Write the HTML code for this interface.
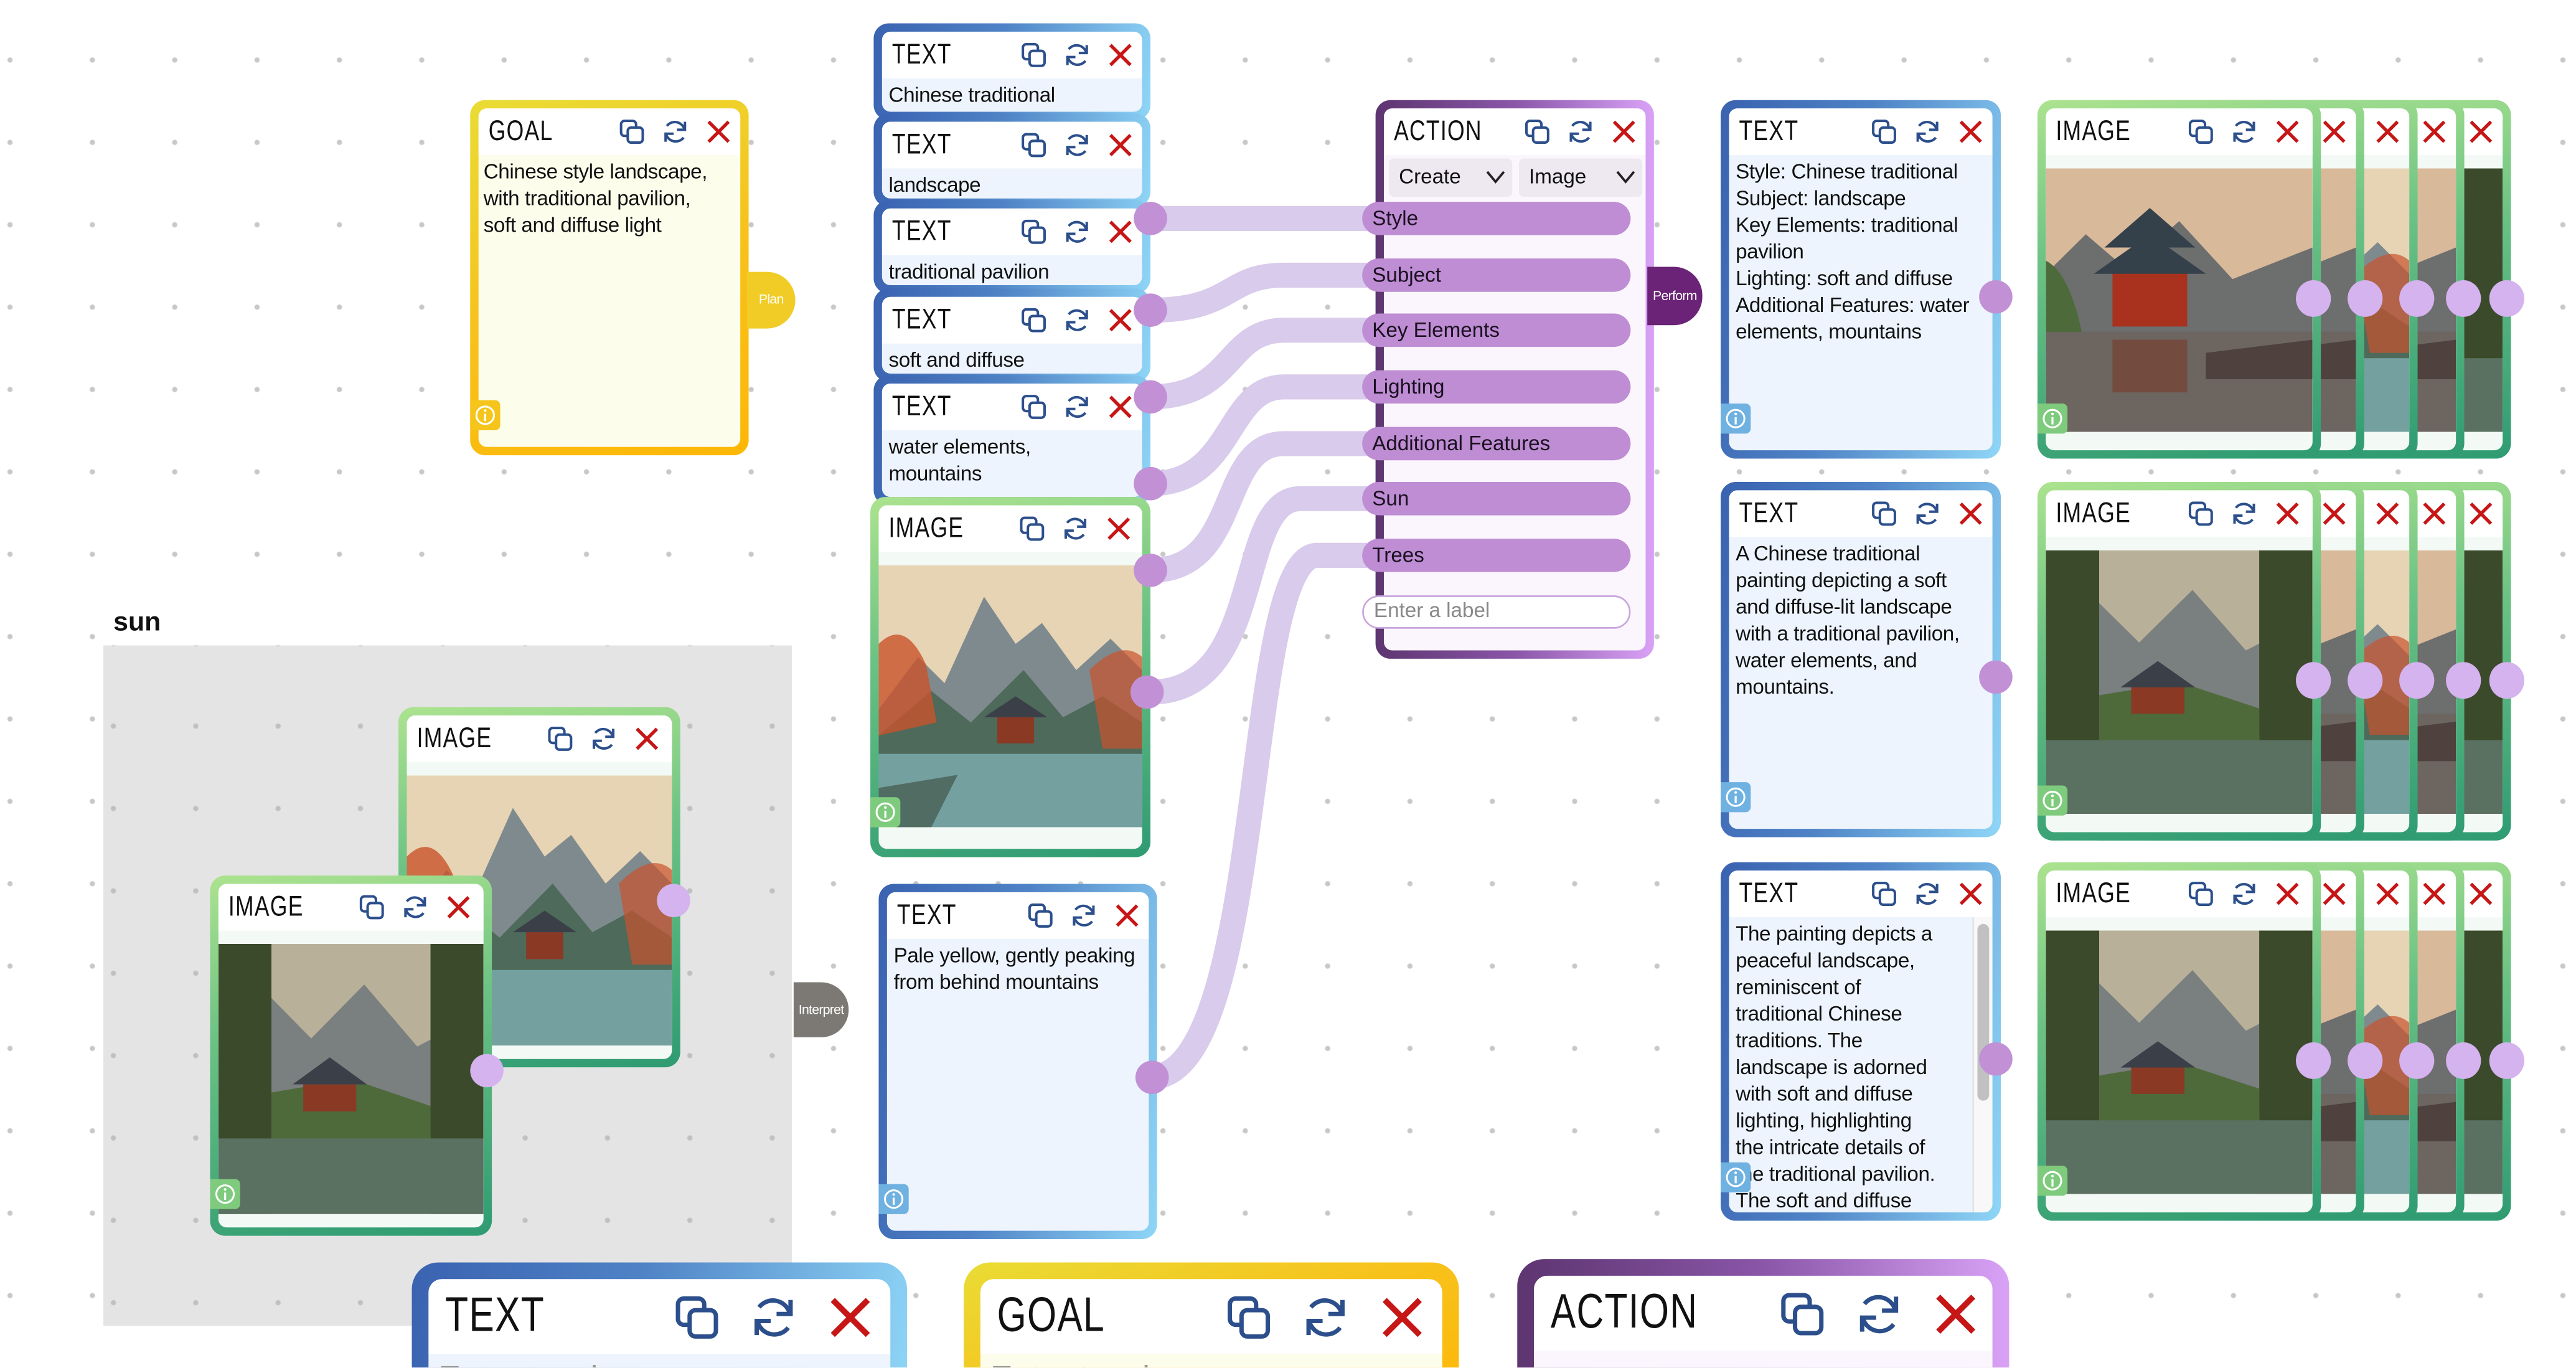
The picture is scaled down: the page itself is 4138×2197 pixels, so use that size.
<!DOCTYPE html>
<html><head><meta charset="utf-8">
<style>
*{box-sizing:border-box;margin:0;padding:0}
html,body{width:4138px;height:2197px;overflow:hidden;background:#fff}
#w{position:absolute;left:0;top:0;width:1545px;height:820.3px;transform:scale(2.67832);transform-origin:0 0;
background-image:radial-gradient(circle,#c8c8c8 1.3px,transparent 1.8px);background-size:49.4px 49.4px;background-position:-18.7px 11.3px;
font-family:"Liberation Sans","DejaVu Sans",sans-serif;color:#111;overflow:hidden}
.n{position:absolute;border-radius:9px;padding:5px}
.in{width:100%;height:100%;border-radius:5px;overflow:hidden;position:relative}
.hd{height:28px;background:#fff;position:relative}
.tt{position:absolute;left:6px;top:4px;font-family:"Liberation Sans",sans-serif;font-size:17px;letter-spacing:.6px;transform:scaleX(.78);transform-origin:0 0;white-space:nowrap}
.ic{position:absolute;top:6px;width:16px;height:16px}
.bd{font-size:12.4px;letter-spacing:-.15px;line-height:16px;padding:2px 4px;white-space:pre-line}
.blue{background:linear-gradient(100deg,#3a62b0 0%,#4f83c6 45%,#8fd6f7 100%)}
.blue .in{background:#edf4fd}
.green{background:linear-gradient(170deg,#ace38f 0%,#6cc284 40%,#2f9b72 100%)}
.green .in{background:#f3faf5}
.yellow{background:linear-gradient(160deg,#e9dc35 0%,#f7c21c 50%,#fdb706 100%)}
.yellow .in{background:#fdfdec}
.purple{background:linear-gradient(90deg,#5d3570 0%,#8a56a8 50%,#d9a2f6 100%)}
.purple .in{background:#fbf6fd}
.img{position:absolute;left:0;right:0;top:36px;overflow:hidden}
.info{position:absolute;left:0;width:18px;height:18px;border-radius:0 3px 3px 0}
.dot{position:absolute;width:20px;height:20px;border-radius:50%;background:#d4b3ee}
.pdot{position:absolute;width:20px;height:20px;border-radius:50%;background:#c190d5}
.pill{position:absolute;left:817px;width:161px;height:20px;border-radius:10px;background:#be8dd3;font-size:12.4px;line-height:20px;padding-left:6px;color:#1a1020}
.tab{position:absolute;color:#fff;font-size:8px;text-align:center;border-radius:0 17px 17px 0;letter-spacing:-.3px}
.big{font-size:29px!important;left:10px!important;top:6px!important}
</style></head><body>
<svg width="0" height="0" style="position:absolute">
<defs>
<symbol id="cp" viewBox="0 0 16 16"><rect x="1.5" y="1.5" width="9" height="9" rx="2" fill="none" stroke="#2c4f8c" stroke-width="1.5"/><rect x="5.5" y="5.5" width="9" height="9" rx="2" fill="#fff" stroke="#2c4f8c" stroke-width="1.5"/></symbol>
<symbol id="rf" viewBox="0 0 16 16"><path d="M13.5 6.5A6 6 0 0 0 3 4.5M2.5 9.5A6 6 0 0 0 13 11.5" fill="none" stroke="#2c4f8c" stroke-width="1.5"/><path d="M13.8 2v4.8H9" fill="none" stroke="#2c4f8c" stroke-width="1.5"/><path d="M2.2 14V9.2H7" fill="none" stroke="#2c4f8c" stroke-width="1.5"/></symbol>
<symbol id="x" viewBox="0 0 16 16"><path d="M2 2L14 14M14 2L2 14" stroke="#c61616" stroke-width="2"/></symbol>
<symbol id="inf" viewBox="0 0 16 16"><circle cx="8" cy="8" r="6" fill="none" stroke="#fff" stroke-width="1.3"/><path d="M8 7v5" stroke="#fff" stroke-width="1.4"/><circle cx="8" cy="4.8" r=".9" fill="#fff"/></symbol>
<symbol id="land1" viewBox="0 0 100 100" preserveAspectRatio="none"><rect width="100" height="100" fill="#e6d4b4"/><path d="M0 55L15 35 25 45 40 12 52 30 62 22 75 40 88 28 100 40V75H0Z" fill="#7f8a8e"/><path d="M0 65L20 48 35 60 55 40 70 58 85 50 100 60V80H0Z" fill="#4e6a5a"/><rect y="72" width="100" height="28" fill="#74a0a0"/><path d="M0 30Q10 20 18 38L22 60 0 65Z" fill="#c9532c" opacity=".8"/><path d="M80 40Q92 28 100 35V70H85Z" fill="#c9532c" opacity=".7"/><rect x="45" y="58" width="14" height="10" fill="#8a3a24"/><path d="M40 58L52 50 64 58Z" fill="#3b4048"/><path d="M0 85L30 80 20 100H0Z" fill="#3a4a3a" opacity=".6"/></symbol>
<symbol id="land2" viewBox="0 0 100 100" preserveAspectRatio="none"><rect width="100" height="100" fill="#d8b99a"/><path d="M0 40L15 25 30 38 50 20 70 42 100 30V70H0Z" fill="#6d6e6e"/><path d="M0 35Q10 40 15 70H0Z" fill="#4d6a3a"/><rect y="62" width="100" height="38" fill="#6c6560"/><rect x="25" y="38" width="28" height="22" fill="#a8321e"/><path d="M18 40L39 25 60 40Z" fill="#34404a"/><path d="M22 30L39 15 56 30Z" fill="#34404a"/><rect x="25" y="65" width="28" height="20" fill="#7a3a2a" opacity=".6"/><path d="M60 70L100 65V80H60Z" fill="#3a2a28" opacity=".6"/></symbol>
<symbol id="land3" viewBox="0 0 100 100" preserveAspectRatio="none"><rect width="100" height="100" fill="#b8b098"/><path d="M0 45L20 20 35 35 55 15 75 38 100 25V70H0Z" fill="#7a7f80"/><path d="M0 0H20V100H0ZM80 0H100V100H80Z" fill="#3a4a2a"/><path d="M20 55L50 50 80 60V75H20Z" fill="#4e6a3a"/><rect y="72" width="100" height="28" fill="#5a7060"/><rect x="32" y="50" width="20" height="12" fill="#8a3a24"/><path d="M28 52L42 42 56 52Z" fill="#3b4048"/></symbol>
</defs></svg>
<div id="w">

<svg style="position:absolute;left:0;top:0" width="1545" height="820">
<g fill="none" stroke="#d9cbec" stroke-width="15" stroke-linecap="butt">
<path d="M690 131H820"/>
<path d="M690 186C740 186 735 165 770 165H820"/>
<path d="M690 238C740 238 735 198 770 198H820"/>
<path d="M690 290C740 290 735 232 770 232H820"/>
<path d="M690 342C745 342 730 266 770 266H820"/>
<path d="M690 415C760 415 740 299 780 299H820"/>
<path d="M690 646C760 646 745 333 790 333H820"/>
</g></svg>

<div class="n yellow" style="left:282px;top:60px;width:167px;height:213px"><div class="in">
<div class="hd"><span class="tt">GOAL</span><svg class="ic" style="left:84px"><use href="#cp"/></svg><svg class="ic" style="left:110px"><use href="#rf"/></svg><svg class="ic" style="left:136px"><use href="#x"/></svg></div>
<div class="bd" style="padding-left:3px">Chinese style landscape,
with traditional pavilion,
soft and diffuse light</div></div>
<div class="info" style="top:180px;background:#f5c51b"><svg width="14" height="14" style="margin:2px"><use href="#inf"/></svg></div></div>
<div class="tab" style="left:448px;top:163px;width:29px;height:34px;line-height:34px;background:#f1cc26">Plan</div>

<div class="n blue" style="left:524px;top:14px;width:166px;height:58px"><div class="in">
<div class="hd"><span class="tt">TEXT</span><svg class="ic" style="left:83px"><use href="#cp"/></svg><svg class="ic" style="left:109px"><use href="#rf"/></svg><svg class="ic" style="left:135px"><use href="#x"/></svg></div>
<div class="bd">Chinese traditional</div></div></div>
<div class="n blue" style="left:524px;top:68px;width:166px;height:56px"><div class="in">
<div class="hd"><span class="tt">TEXT</span><svg class="ic" style="left:83px"><use href="#cp"/></svg><svg class="ic" style="left:109px"><use href="#rf"/></svg><svg class="ic" style="left:135px"><use href="#x"/></svg></div>
<div class="bd">landscape</div></div></div>
<div class="n blue" style="left:524px;top:120px;width:166px;height:56px"><div class="in">
<div class="hd"><span class="tt">TEXT</span><svg class="ic" style="left:83px"><use href="#cp"/></svg><svg class="ic" style="left:109px"><use href="#rf"/></svg><svg class="ic" style="left:135px"><use href="#x"/></svg></div>
<div class="bd">traditional pavilion</div></div></div>
<div class="n blue" style="left:524px;top:173px;width:166px;height:56px"><div class="in">
<div class="hd"><span class="tt">TEXT</span><svg class="ic" style="left:83px"><use href="#cp"/></svg><svg class="ic" style="left:109px"><use href="#rf"/></svg><svg class="ic" style="left:135px"><use href="#x"/></svg></div>
<div class="bd">soft and diffuse</div></div></div>
<div class="n blue" style="left:524px;top:225px;width:166px;height:78px"><div class="in">
<div class="hd"><span class="tt">TEXT</span><svg class="ic" style="left:83px"><use href="#cp"/></svg><svg class="ic" style="left:109px"><use href="#rf"/></svg><svg class="ic" style="left:135px"><use href="#x"/></svg></div>
<div class="bd">water elements,
mountains</div></div></div>
<div class="n green" style="left:522px;top:298px;width:168px;height:216px"><div class="in">
<div class="hd"><span class="tt">IMAGE</span><svg class="ic" style="left:84px"><use href="#cp"/></svg><svg class="ic" style="left:110px"><use href="#rf"/></svg><svg class="ic" style="left:136px"><use href="#x"/></svg></div>
<svg class="img" style="height:157px" width="158" viewBox="0 0 100 100" preserveAspectRatio="none"><use href="#land1"/></svg></div>
<div class="info" style="top:180px;background:#7fcb7e"><svg width="14" height="14" style="margin:2px"><use href="#inf"/></svg></div></div>

<div class="pdot" style="left:680px;top:121px"></div>
<div class="pdot" style="left:680px;top:176px"></div>
<div class="pdot" style="left:680px;top:228px"></div>
<div class="pdot" style="left:680px;top:280px"></div>
<div class="pdot" style="left:680px;top:332px"></div>
<div class="pdot" style="left:678px;top:405px"></div>

<div class="n blue" style="left:527px;top:530px;width:167px;height:213px"><div class="in">
<div class="hd"><span class="tt">TEXT</span><svg class="ic" style="left:84px"><use href="#cp"/></svg><svg class="ic" style="left:110px"><use href="#rf"/></svg><svg class="ic" style="left:136px"><use href="#x"/></svg></div>
<div class="bd" style="white-space:pre">Pale yellow, gently peaking
from behind mountains</div></div>
<div class="info" style="top:180px;background:#6fb1e0"><svg width="14" height="14" style="margin:2px"><use href="#inf"/></svg></div></div>
<div class="pdot" style="left:681px;top:636px"></div>

<div class="n purple" style="left:825px;top:60px;width:167px;height:335px"><div class="in">
<div class="hd"><span class="tt">ACTION</span><svg class="ic" style="left:84px"><use href="#cp"/></svg><svg class="ic" style="left:110px"><use href="#rf"/></svg><svg class="ic" style="left:136px"><use href="#x"/></svg></div>
<div style="position:absolute;left:3px;top:30px;width:74px;height:23px;background:#eee9f0;border-radius:3px;font-size:12.4px;line-height:23px;padding-left:6px">Create<svg style="position:absolute;right:4px;top:7px" width="12" height="9"><path d="M1 1L6 7 11 1" fill="none" stroke="#222" stroke-width="1.4"/></svg></div>
<div style="position:absolute;left:81px;top:30px;width:74px;height:23px;background:#eee9f0;border-radius:3px;font-size:12.4px;line-height:23px;padding-left:6px">Image<svg style="position:absolute;right:4px;top:7px" width="12" height="9"><path d="M1 1L6 7 11 1" fill="none" stroke="#222" stroke-width="1.4"/></svg></div>
</div></div>
<div class="pill" style="top:121px">Style</div>
<div class="pill" style="top:155px">Subject</div>
<div class="pill" style="top:188px">Key Elements</div>
<div class="pill" style="top:222px">Lighting</div>
<div class="pill" style="top:256px">Additional Features</div>
<div class="pill" style="top:289px">Sun</div>
<div class="pill" style="top:323px">Trees</div>
<div class="pill" style="top:357px;background:#fff;border:1.5px solid #c9a6dc;color:#888;line-height:17px">Enter a label</div>
<div class="tab" style="left:988px;top:160px;width:33px;height:35px;line-height:35px;background:#6a2376">Perform</div>

<div style="position:absolute;left:62px;top:362px;width:413px;height:433px;background:#e4e4e4;background-image:radial-gradient(circle,#c0c0c0 1.3px,transparent 1.8px);background-size:49.4px 49.4px;background-position:-18.7px -0.7px">
<div style="height:25px;background:#fff;font-weight:bold;font-size:16px;padding:3px 6px">sun</div></div>
<div class="n green" style="left:239px;top:424px;width:169px;height:216px"><div class="in">
<div class="hd"><span class="tt">IMAGE</span><svg class="ic" style="left:84px"><use href="#cp"/></svg><svg class="ic" style="left:110px"><use href="#rf"/></svg><svg class="ic" style="left:136px"><use href="#x"/></svg></div>
<svg class="img" style="height:162px" width="159" viewBox="0 0 100 100" preserveAspectRatio="none"><use href="#land1"/></svg></div></div>
<div class="dot" style="left:394px;top:530px"></div>
<div class="n green" style="left:126px;top:525px;width:169px;height:216px"><div class="in">
<div class="hd"><span class="tt">IMAGE</span><svg class="ic" style="left:84px"><use href="#cp"/></svg><svg class="ic" style="left:110px"><use href="#rf"/></svg><svg class="ic" style="left:136px"><use href="#x"/></svg></div>
<svg class="img" style="height:162px" width="159" viewBox="0 0 100 100" preserveAspectRatio="none"><use href="#land3"/></svg></div>
<div class="info" style="top:182px;background:#7fcb7e"><svg width="14" height="14" style="margin:2px"><use href="#inf"/></svg></div></div>
<div class="dot" style="left:282px;top:632px"></div>
<div class="tab" style="left:476px;top:589px;width:33px;height:33px;line-height:33px;background:#7c7975">Interpret</div>

<div class="n blue" style="left:1032px;top:60px;width:168px;height:215px"><div class="in">
<div class="hd"><span class="tt">TEXT</span><svg class="ic" style="left:85px"><use href="#cp"/></svg><svg class="ic" style="left:111px"><use href="#rf"/></svg><svg class="ic" style="left:137px"><use href="#x"/></svg></div>
<div class="bd">Style: Chinese traditional
Subject: landscape
Key Elements: traditional
pavilion
Lighting: soft and diffuse
Additional Features: water
elements, mountains</div></div>
<div class="info" style="top:182px;background:#6fb1e0"><svg width="14" height="14" style="margin:2px"><use href="#inf"/></svg></div></div>
<div class="pdot" style="left:1187px;top:168px"></div>
<div class="n blue" style="left:1032px;top:289px;width:168px;height:213px"><div class="in">
<div class="hd"><span class="tt">TEXT</span><svg class="ic" style="left:85px"><use href="#cp"/></svg><svg class="ic" style="left:111px"><use href="#rf"/></svg><svg class="ic" style="left:137px"><use href="#x"/></svg></div>
<div class="bd">A Chinese traditional
painting depicting a soft
and diffuse-lit landscape
with a traditional pavilion,
water elements, and
mountains.</div></div>
<div class="info" style="top:180px;background:#6fb1e0"><svg width="14" height="14" style="margin:2px"><use href="#inf"/></svg></div></div>
<div class="pdot" style="left:1187px;top:396px"></div>
<div class="n blue" style="left:1032px;top:517px;width:168px;height:215px"><div class="in">
<div class="hd"><span class="tt">TEXT</span><svg class="ic" style="left:85px"><use href="#cp"/></svg><svg class="ic" style="left:111px"><use href="#rf"/></svg><svg class="ic" style="left:137px"><use href="#x"/></svg></div>
<div class="bd" style="padding-right:20px">The painting depicts a
peaceful landscape,
reminiscent of
traditional Chinese
traditions. The
landscape is adorned
with soft and diffuse
lighting, highlighting
the intricate details of
the traditional pavilion.
The soft and diffuse</div>
<div style="position:absolute;right:0;top:28px;width:12px;bottom:0;background:#f8f8f8;border-left:1px solid #e2e2e2"><div style="margin:4px 2px;height:106px;border-radius:4px;background:#c1c1c1"></div></div></div>
<div class="info" style="top:180px;background:#6fb1e0"><svg width="14" height="14" style="margin:2px"><use href="#inf"/></svg></div></div>
<div class="pdot" style="left:1187px;top:625px"></div>

<div id="stacks"></div>
<script>
var h='';var rows=[60,289,517];var lands=['land2','land3','land3'];
rows.forEach(function(t,ri){
 var offs=[116,88,60,28];
 offs.forEach(function(o){
  h+='<div class="n green" style="left:'+(1222+o)+'px;top:'+t+'px;width:168px;height:215px"><div class="in"><div class="hd"><svg class="ic" style="left:137px"><use href="#x"/></svg></div><svg class="img" style="height:158px" width="158" viewBox="0 0 100 100" preserveAspectRatio="none"><use href="#land'+(o%3+1)+'"/></svg></div></div>';
 });
 h+='<div class="n green" style="left:1222px;top:'+t+'px;width:170px;height:215px"><div class="in"><div class="hd"><span class="tt">IMAGE</span><svg class="ic" style="left:85px"><use href="#cp"/></svg><svg class="ic" style="left:111px"><use href="#rf"/></svg><svg class="ic" style="left:137px"><use href="#x"/></svg></div><svg class="img" style="height:158px" width="160" viewBox="0 0 100 100" preserveAspectRatio="none"><use href="#'+lands[ri]+'"/></svg></div><div class="info" style="top:182px;background:#7fcb7e"><svg width="14" height="14" style="margin:2px"><use href="#inf"/></svg></div></div>';
 [1377,1408,1439,1467,1493].forEach(function(x){h+='<div class="dot" style="left:'+x+'px;top:'+(t+108)+'px;width:21px;height:22px"></div>';});
});
document.getElementById('stacks').innerHTML=h;
</script>

<div class="n blue" style="left:247px;top:757px;width:297px;height:90px;padding:10px;border-radius:16px"><div class="in" style="border-radius:8px">
<div class="hd" style="height:45px"><span class="tt big">TEXT</span><svg class="ic" style="left:147px;top:9px;width:28px;height:28px"><use href="#cp"/></svg><svg class="ic" style="left:193px;top:9px;width:28px;height:28px"><use href="#rf"/></svg><svg class="ic" style="left:239px;top:9px;width:28px;height:28px"><use href="#x"/></svg></div>
<div style="font-size:20px;color:#9a9a9a;padding:4px 6px">Enter text here</div></div></div>
<div class="n yellow" style="left:578px;top:757px;width:297px;height:90px;padding:10px;border-radius:16px"><div class="in" style="border-radius:8px">
<div class="hd" style="height:45px"><span class="tt big">GOAL</span><svg class="ic" style="left:147px;top:9px;width:28px;height:28px"><use href="#cp"/></svg><svg class="ic" style="left:193px;top:9px;width:28px;height:28px"><use href="#rf"/></svg><svg class="ic" style="left:239px;top:9px;width:28px;height:28px"><use href="#x"/></svg></div>
<div style="font-size:20px;color:#9a9a9a;padding:4px 6px">Enter text here</div></div></div>
<div class="n purple" style="left:910px;top:755px;width:295px;height:90px;padding:10px;border-radius:16px"><div class="in" style="border-radius:8px">
<div class="hd" style="height:45px"><span class="tt big">ACTION</span><svg class="ic" style="left:147px;top:9px;width:28px;height:28px"><use href="#cp"/></svg><svg class="ic" style="left:193px;top:9px;width:28px;height:28px"><use href="#rf"/></svg><svg class="ic" style="left:239px;top:9px;width:28px;height:28px"><use href="#x"/></svg></div>
</div></div>

</div>
</body></html>
